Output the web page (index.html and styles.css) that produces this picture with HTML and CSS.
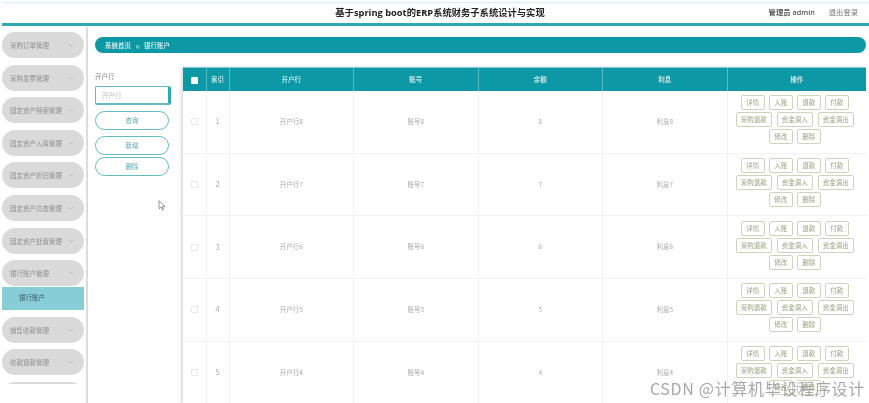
FILE: index.html
```html
<!DOCTYPE html>
<html lang="zh">
<head>
<meta charset="utf-8">
<title>银行账户</title>
<link rel="stylesheet" href="styles.css">
</head>
<body>
<div class="page">
  <header class="topbar">
    <div class="title">基于spring boot的ERP系统财务子系统设计与实现</div>
    <div class="user"><span class="admin">管理员 admin</span><span class="logout">退出登录</span></div>
  </header>
  <div class="body">
    <aside class="side">
      <div class="menu"><span>采购订单管理</span><svg class="chev" viewBox="0 0 8 5"><path d="M1 1l3 3 3-3"/></svg></div>
      <div class="menu"><span>采购发票管理</span><svg class="chev" viewBox="0 0 8 5"><path d="M1 1l3 3 3-3"/></svg></div>
      <div class="menu"><span>固定资产档案管理</span><svg class="chev" viewBox="0 0 8 5"><path d="M1 1l3 3 3-3"/></svg></div>
      <div class="menu"><span>固定资产入库管理</span><svg class="chev" viewBox="0 0 8 5"><path d="M1 1l3 3 3-3"/></svg></div>
      <div class="menu"><span>固定资产折旧管理</span><svg class="chev" viewBox="0 0 8 5"><path d="M1 1l3 3 3-3"/></svg></div>
      <div class="menu"><span>固定资产清查管理</span><svg class="chev" viewBox="0 0 8 5"><path d="M1 1l3 3 3-3"/></svg></div>
      <div class="menu"><span>固定资产处置管理</span><svg class="chev" viewBox="0 0 8 5"><path d="M1 1l3 3 3-3"/></svg></div>
      <div class="menu open"><span>银行账户管理</span><svg class="chev" viewBox="0 0 8 5"><path d="M1 4l3-3 3 3"/></svg></div>
      <div class="submenu">银行账户</div>
      <div class="menu"><span>销售收款管理</span><svg class="chev" viewBox="0 0 8 5"><path d="M1 1l3 3 3-3"/></svg></div>
      <div class="menu"><span>收款退款管理</span><svg class="chev" viewBox="0 0 8 5"><path d="M1 1l3 3 3-3"/></svg></div>
      <div class="menu"></div>
    </aside>
    <main class="main">
      <nav class="crumb"><b>系统首页</b><i>〣</i><b>银行账户</b></nav>
      <div class="content">
        <form class="filter">
          <label class="flabel">开户行</label>
          <div class="finput">开户行</div>
          <div class="btn first">查询</div>
          <div class="btn second">新增</div>
          <div class="btn third">删除</div>
        </form>
        <table class="grid">
          <colgroup>
            <col class="c-check"><col class="c-idx"><col class="c-data"><col class="c-data"><col class="c-data"><col class="c-data"><col class="c-ops">
          </colgroup>
          <thead>
            <tr><th><span class="hbox"></span></th><th>索引</th><th>开户行</th><th>账号</th><th>余额</th><th>利息</th><th>操作</th></tr>
          </thead>
          <tbody>
            <tr><td><span class="box"></span></td><td class="num">1</td><td>开户行8</td><td>账号8</td><td>8</td><td>利息8</td>
              <td class="ops"><div class="opwrap"><a>详情</a><a>入账</a><a>退款</a><a>付款</a><a class="w">采购退款</a><a class="w">资金调入</a><a class="w">资金调出</a><a>修改</a><a>删除</a></div></td></tr>
            <tr><td><span class="box"></span></td><td class="num">2</td><td>开户行7</td><td>账号7</td><td>7</td><td>利息7</td>
              <td class="ops"><div class="opwrap"><a>详情</a><a>入账</a><a>退款</a><a>付款</a><a class="w">采购退款</a><a class="w">资金调入</a><a class="w">资金调出</a><a>修改</a><a>删除</a></div></td></tr>
            <tr><td><span class="box"></span></td><td class="num">3</td><td>开户行6</td><td>账号6</td><td>6</td><td>利息6</td>
              <td class="ops"><div class="opwrap"><a>详情</a><a>入账</a><a>退款</a><a>付款</a><a class="w">采购退款</a><a class="w">资金调入</a><a class="w">资金调出</a><a>修改</a><a>删除</a></div></td></tr>
            <tr><td><span class="box"></span></td><td class="num">4</td><td>开户行5</td><td>账号5</td><td>5</td><td>利息5</td>
              <td class="ops"><div class="opwrap"><a>详情</a><a>入账</a><a>退款</a><a>付款</a><a class="w">采购退款</a><a class="w">资金调入</a><a class="w">资金调出</a><a>修改</a><a>删除</a></div></td></tr>
            <tr><td><span class="box"></span></td><td class="num">5</td><td>开户行4</td><td>账号4</td><td>4</td><td>利息4</td>
              <td class="ops"><div class="opwrap"><a>详情</a><a>入账</a><a>退款</a><a>付款</a><a class="w">采购退款</a><a class="w">资金调入</a><a class="w">资金调出</a><a>修改</a><a>删除</a></div></td></tr>
          </tbody>
        </table>
      </div>
    </main>
  </div>
  <svg class="cursor" viewBox="0 0 8 11"><path d="M1 .8v8l2-1.8 1.3 3 1.3-.6L4.300 6.600H7z"/></svg>
  <div class="mark">CSDN @计算机毕设程序设计</div>
</div>
</body>
</html>
```
FILE: styles.css
```css
* { box-sizing: border-box; }
html, body { margin: 0; height: 403px; overflow: hidden; background: #fff; }
body { font-family: "Noto Sans CJK SC", "Noto Sans", sans-serif; font-size: 6.5px; color: #999; }
.page { position: relative; width: 869px; height: 403px; overflow: hidden; padding-top: 2px; filter: blur(.45px); }

.topbar { position: relative; height: 24px; margin-left: 2px; padding-bottom: 3px; border-top: 1px solid #d8f3f6; border-bottom: 3px solid #2fa9b2; display: flex; align-items: center; justify-content: center; }
.title { margin-left: 9px; font-family: "Open Sans", "Noto Sans CJK SC", sans-serif; font-size: 9.300px; font-weight: 700; color: #222; white-space: nowrap; }
.user { position: absolute; right: 11px; top: 1px; display: flex; gap: 14px; font-size: 7.300px; line-height: 16px; }
.admin { font-family: "Open Sans", "Noto Sans CJK SC", sans-serif; color: #555; font-weight: 600; }
.logout { color: #777; }

.body { display: flex; height: 377px; margin-left: 2px; }
.side { width: 84px; height: 358px; padding-top: 6px; overflow: hidden; flex: none; }
.body::before { content: ""; order: 1; width: 2px; margin-top: 1px; flex: none; background: #dcdcdc; }
.menu { display: flex; align-items: center; justify-content: space-between; width: 82px; height: 26px; margin-bottom: 6.600px; padding: 0 10px 0 8px; border-radius: 13px; background: #dadada; color: #8f8f8f; }
.menu.open { margin-bottom: 1px; }
.chev { width: 6px; height: 4px; fill: none; stroke: #aaa; stroke-width: .8; }
.submenu { width: 82px; height: 23px; margin-bottom: 6.500px; padding-left: 17px; line-height: 21px; background: #87cdd5; color: #3a5a66; }

.main { order: 2; flex: 1; padding: 11px 3px 0 7px; min-width: 0; }
.crumb { display: flex; align-items: center; gap: 4px; height: 16px; padding-left: 10px; border-radius: 8px; background: #0d98a6; color: #e8f6f7; }
.crumb b { font-weight: 500; }
.crumb i { font-style: normal; color: #cfe; font-size: 5px; }

.content { display: flex; align-items: flex-start; margin-top: 14px; }
.filter { width: 88px; flex: none; padding-top: 5px; }
.flabel { display: block; height: 14px; line-height: 8px; font-size: 6.500px; color: #888; }
.finput { width: 76px; height: 19px; padding-left: 6px; line-height: 17px; border: 1px solid #63bcc5; border-right: 3px solid #2fa9b2; border-bottom-width: 2px; border-radius: 2px; color: #bbb; }
.btn { width: 74px; height: 18.500px; border: 1px solid #63bcc5; border-radius: 10px; text-align: center; line-height: 16px; color: #5aabb3; }
.first { margin-top: 6px; }
.second { margin-top: 6.500px; }
.third { margin-top: 2.500px; }

.grid { width: 683px; table-layout: fixed; border-collapse: collapse; box-shadow: -2px 0 3px rgba(0,0,0,.14); }
.c-check, .c-idx { width: 23px; }
.c-data { width: 124.500px; }
.grid th { height: 23px; padding: 0; background: #0d98a6; border-left: 1px solid #5fbcc5; border-top: 1px solid #7fcad1; color: #e6f5f6; font-size: 6.500px; font-weight: 500; text-align: center; }
.grid th:first-child { border-left: 0; }
.grid td { height: 62.700px; padding: 0 0 2px; border-left: 1px solid #f2f2f2; border-bottom: 1px solid #f2f2f2; text-align: center; color: #aaa; }
.grid td:first-child { border-left: 0; }
.grid .num { font-size: 7.500px; }
.hbox { display: inline-block; width: 7px; height: 7px; margin-top: 4px; background: #fff; border-radius: 1px; }
.box { display: inline-block; width: 7px; height: 7px; margin-top: 4px; border: 1px solid #e8e8e8; border-radius: 1px; }
.opwrap { display: flex; flex-wrap: wrap; justify-content: center; gap: 2px 4.500px; width: 125px; margin: 0 auto; }
.opwrap a { width: 23.500px; height: 15px; border: 1px solid #cfd3bd; border-radius: 2px; line-height: 13px; color: #9aa383; text-align: center; }
.opwrap a.w { width: 36.500px; }
.grid .ops { padding: 0 4px 4px 0; }

.cursor { position: absolute; left: 158px; top: 200px; width: 8px; height: 11px; fill: #fff; stroke: #666; stroke-width: .7; }
.mark { position: absolute; right: 4px; top: 378px; font-family: "Noto Sans CJK SC", sans-serif; font-size: 16px; letter-spacing: .7px; line-height: 20px; color: rgba(130,130,130,.7); white-space: nowrap; }
```
